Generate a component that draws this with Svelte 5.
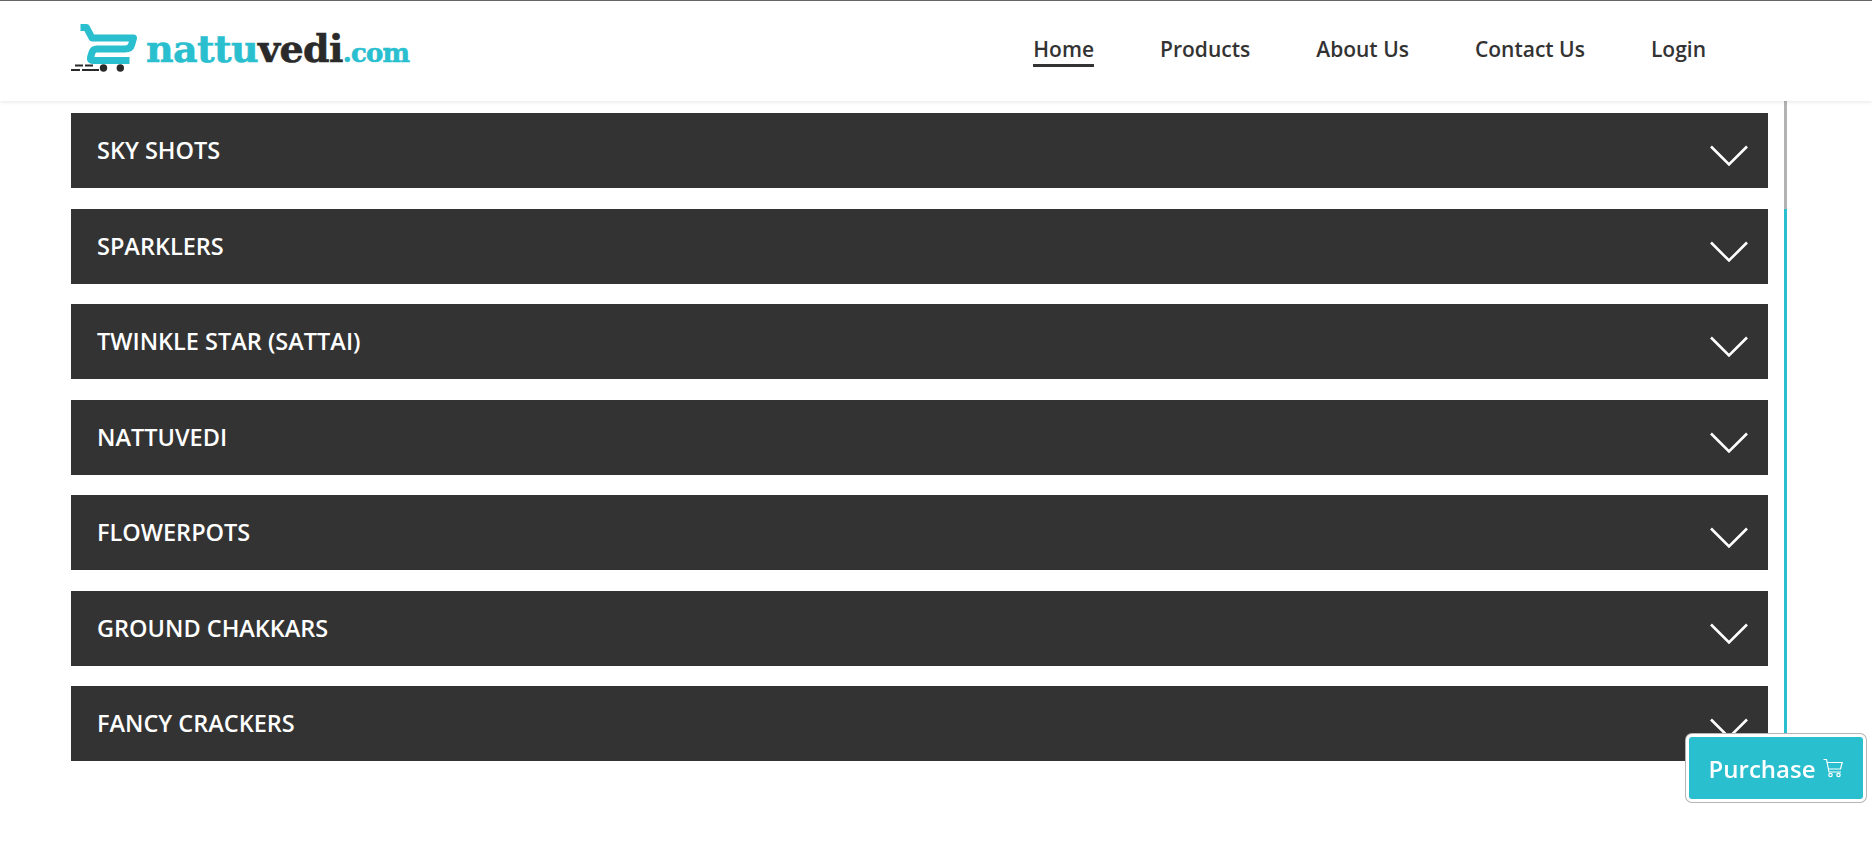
<script>
  const rows = ['SKY SHOTS','SPARKLERS','TWINKLE STAR (SATTAI)','NATTUVEDI','FLOWERPOTS','GROUND CHAKKARS','FANCY CRACKERS'];
  const nav = ['Home','Products','About Us','Contact Us','Login'];
</script>

<div class="page">
  <header class="top">
    <a class="logo" href="#home">
      <svg class="cart" width="72" height="52" viewBox="71 22 72 52" aria-hidden="true">
        <path d="M80.500 28.500H86.500L92 39H133.500L131.700 45.500Q130.500 50 125 50H97Q93 50 92 53.500L90.500 58.500Q89.800 61.500 93 61.500H129.500" fill="none" stroke="#29bfcf" stroke-width="7" stroke-linejoin="round"/>
        <circle cx="103.500" cy="69" r="3.700" fill="#2a2a2a"/>
        <circle cx="120.300" cy="69" r="3.700" fill="#2a2a2a"/>
        <path d="M75 66.500h8M85 66.500h8M71 71h9M82 71h17" stroke="#2a2a2a" stroke-width="1.800" fill="none"/>
      </svg>
      <span class="word"><span class="teal">nattu</span><span class="dark">vedi</span><span class="com">.com</span></span>
    </a>
    <nav class="menu">
      {#each nav as item, i}
        <a class="link" class:active={i === 0} href="#x">{item}</a>
      {/each}
    </nav>
  </header>

  <div class="body">
    <main class="list">
      {#each rows as row}
        <div class="row">
          <span class="label">{row}</span>
          <svg class="chev" width="38" height="22" viewBox="0 0 38 22" aria-hidden="true">
            <path d="M1 1.500 19 19.500 37 1.500" fill="none" stroke="#fff" stroke-width="2.600"/>
          </svg>
        </div>
      {/each}
    </main>
    <div class="track"><div class="thumb"></div><div class="rest"></div></div>
  </div>

  <button class="buy">
    Purchase
    <svg width="20" height="20" viewBox="0 0 20 20" aria-hidden="true">
      <path d="M0.500 1.500h3l2.500 12.500h12M4.200 4.500h15l-1.700 6.500H5.700" fill="none" stroke="#fff" stroke-width="1.200"/>
      <circle cx="7.500" cy="17" r="1.700" fill="none" stroke="#fff" stroke-width="1.200"/>
      <circle cx="15.500" cy="17" r="1.700" fill="none" stroke="#fff" stroke-width="1.200"/>
    </svg>
  </button>
</div>

<style>
  :global(body) { margin: 0; background: #fff; }
  .page { height: 844px; overflow: hidden; font-family: "Open Sans", sans-serif; }
  .top {
    height: 100px;
    border-top: 1px solid #666;
    display: flex;
    align-items: center;
    justify-content: space-between;
    padding: 0 166px 0 71px;
    box-shadow: 0 1px 4px rgba(0,0,0,.1);
    position: relative;
  }
  .logo { display: flex; align-items: flex-start; text-decoration: none; margin-top: -3px; }
  .cart { display: block; flex: none; }
  .word {
    font-family: "DejaVu Serif", serif;
    font-weight: 700;
    margin: 6px 0 0 3px;
    line-height: 44px;
    white-space: nowrap;
    -webkit-text-stroke: .6px currentColor;
  }
  .teal { color: #29bfcf; font-size: 38px; letter-spacing: -.6px; }
  .dark { color: #2a2a2a; font-size: 38px; letter-spacing: -.6px; }
  .com { color: #29bfcf; font-size: 26px; letter-spacing: -.9px; }
  .menu { display: flex; gap: 66px; }
  .link {
    color: #333;
    text-decoration: none;
    font-size: 21px;
    font-weight: 600;
    line-height: 28px;
    padding-bottom: 1px;
    border-bottom: 3px solid transparent;
  }
  .active { border-bottom-color: #333; }
  .body { display: flex; align-items: flex-start; padding-left: 71px; }
  .list { width: 1697px; padding-top: 12px; display: flex; flex-direction: column; gap: 20.500px; }
  .row {
    height: 75px;
    background: #333;
    color: #fff;
    display: flex;
    align-items: center;
    justify-content: space-between;
    padding: 0 20px 0 26px;
    font-size: 23.500px;
    font-weight: 600;
    box-sizing: border-box;
  }
  .label { margin-top: -1px; }
  .chev { margin-top: 11px; }
  .track { margin-left: 16px; width: 3px; display: flex; flex-direction: column; }
  .thumb { height: 108px; background: #b3b3b3; }
  .rest { height: 530px; background: #29bfcf; }
  .buy {
    position: fixed;
    left: 1686px;
    top: 734px;
    width: 180px;
    height: 68px;
    box-sizing: border-box;
    background: #29bfcf;
    border: 3px solid #fff;
    box-shadow: 0 0 0 1px #b5b5b5;
    border-radius: 6px;
    color: #fff;
    font-family: "Open Sans", sans-serif;
    font-size: 24px;
    font-weight: 600;
    display: flex;
    align-items: center;
    justify-content: center;
    gap: 8px;
    padding: 0;
  }
</style>
